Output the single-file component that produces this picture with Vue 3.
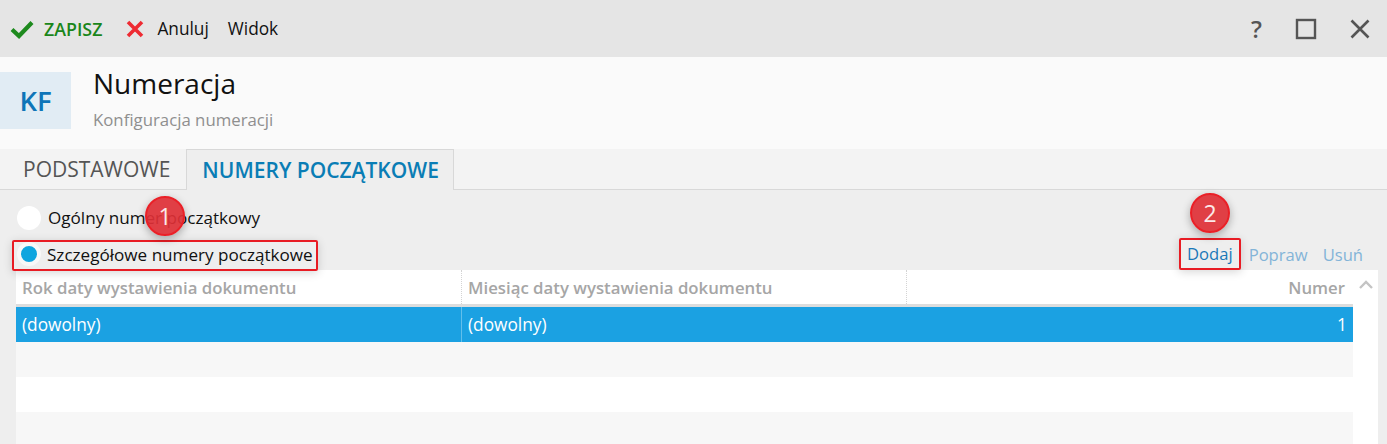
<template>
  <div class="window">
    <div class="toolbar">
      <div class="tool-left">
        <button class="tool save">
          <svg width="24" height="20" viewBox="0 0 24 20"><path d="M2 10.5 L9 17 L22 3.5" fill="none" stroke="#1e8a1e" stroke-width="4.2" /></svg>
          <span>ZAPISZ</span>
        </button>
        <button class="tool cancel">
          <svg width="18" height="18" viewBox="0 0 18 18"><path d="M2 2 L16 16 M16 2 L2 16" fill="none" stroke="#ee2b33" stroke-width="3.6" /></svg>
          <span>Anuluj</span>
        </button>
        <button class="tool view"><span>Widok</span></button>
      </div>
      <div class="tool-right">
        <span class="help">?</span>
        <svg width="22" height="22" viewBox="0 0 22 22"><rect x="2" y="2" width="18" height="18" fill="none" stroke="#555" stroke-width="2.4" /></svg>
        <svg width="20" height="20" viewBox="0 0 20 20"><path d="M1.5 1.5 L18.5 18.5 M18.5 1.5 L1.5 18.5" fill="none" stroke="#555" stroke-width="2.6" /></svg>
      </div>
    </div>

    <div class="head">
      <div class="badge">KF</div>
      <div class="head-text">
        <div class="title">Numeracja</div>
        <div class="subtitle">Konfiguracja numeracji</div>
      </div>
    </div>

    <div class="tabs">
      <div class="tab">PODSTAWOWE</div>
      <div class="tab active">NUMERY POCZĄTKOWE</div>
    </div>

    <div class="content">
      <div class="options">
        <label class="radio-row first">
          <span class="radio"></span>
          <span>Ogólny numer początkowy</span>
        </label>
        <div class="second-row">
          <label class="radio-row marked">
            <span class="radio on"></span>
            <span class="marked-label">Szczegółowe numery początkowe</span>
          </label>
          <div class="actions">
            <span class="action marked-action">Dodaj</span>
            <span class="action faded">Popraw</span>
            <span class="action faded">Usuń</span>
          </div>
        </div>
      </div>

      <div class="grid-wrap">
        <div class="grid">
          <div class="row header">
            <div class="cell">Rok daty wystawienia dokumentu</div>
            <div class="cell">Miesiąc daty wystawienia dokumentu</div>
            <div class="cell num">Numer</div>
          </div>
          <div
            v-for="(r, i) in rows"
            :key="i"
            class="row body"
            :class="{ selected: r.selected, alt: i % 2 === 0 }"
          >
            <div class="cell">{{ r.year }}</div>
            <div class="cell">{{ r.month }}</div>
            <div class="cell num">{{ r.num }}</div>
          </div>
        </div>
        <div class="scrollbar">
          <svg width="14" height="10" viewBox="0 0 14 10"><path d="M1 8 L7 2 L13 8" fill="none" stroke="#c4c4c4" stroke-width="2.4" /></svg>
        </div>
      </div>

      <div class="step step-one">1</div>
      <div class="step step-two">2</div>
    </div>
  </div>
</template>

<script setup>
const rows = [
  { year: '(dowolny)', month: '(dowolny)', num: '1', selected: true },
  { year: '', month: '', num: '' },
  { year: '', month: '', num: '' },
  { year: '', month: '', num: '' }
]
</script>

<style>
html, body {
  margin: 0;
  overflow: hidden;
}
</style>

<style scoped>
.window {
  width: 1387px;
  height: 444px;
  overflow: hidden;
  background: #eeeeee;
  font-family: "Open Sans", "Noto Sans", sans-serif;
  color: #111;
}

.toolbar {
  height: 57px;
  background: #e5e5e5;
  display: flex;
  justify-content: space-between;
  align-items: center;
}

.tool-left {
  display: flex;
  align-items: center;
  padding-left: 10px;
}

.tool {
  display: flex;
  align-items: center;
  border: none;
  background: none;
  padding: 0;
  font: inherit;
  font-size: 17.3px;
  color: #111;
}

.save {
  gap: 10px;
  color: #1a861a;
  font-size: 17.8px;
  font-weight: 600;
  margin-right: 24px;
}

.cancel {
  gap: 13px;
  margin-right: 19px;
}

.tool-right {
  display: flex;
  align-items: center;
  gap: 33px;
  padding-right: 17px;
}

.help {
  font-size: 24px;
  color: #555;
  font-weight: 600;
}

.head {
  height: 92px;
  background: #fafafa;
  display: flex;
  align-items: flex-start;
  box-sizing: border-box;
  padding-top: 15px;
}

.badge {
  width: 71px;
  height: 57px;
  background: #e1ecf4;
  color: #0f75b8;
  font-size: 27.5px;
  font-weight: 600;
  display: flex;
  align-items: center;
  justify-content: center;
}

.head-text {
  margin-left: 22px;
  margin-top: -5px;
}

.title {
  font-size: 28px;
  line-height: 32px;
  color: #111;
}

.subtitle {
  font-size: 16.8px;
  line-height: 22px;
  margin-top: 10px;
  color: #8f8f8f;
}

.tabs {
  height: 41px;
  box-sizing: border-box;
  background: #f3f3f3;
  border-bottom: 1px solid #d8d8d8;
  display: flex;
}

.tab {
  font-size: 21px;
  line-height: 40px;
  color: #555;
  padding: 0 16px 0 23px;
}

.tab.active {
  height: 41px;
  box-sizing: border-box;
  background: #eeeeee;
  border: 1px solid #d8d8d8;
  border-bottom: none;
  color: #0a7db5;
  font-weight: 600;
  padding: 0 14px 0 15px;
  line-height: 40px;
}

.content {
  position: relative;
  padding: 0 9px 0 16px;
}

.options {
  height: 80px;
  font-size: 17.1px;
}

.radio-row {
  display: flex;
  align-items: center;
  gap: 7px;
}

.radio-row.first {
  padding: 14px 0 0 1px;
  height: 27px;
}

.second-row {
  display: flex;
  justify-content: space-between;
  align-items: center;
  margin-top: 7px;
  height: 32px;
}

.radio-row.marked {
  align-self: flex-start;
  margin: 2px 0 0 -4px;
  padding-left: 3px;
  gap: 6px;
  height: 27px;
  width: 299px;
  border: 2px solid #e81c24;
  border-radius: 2px;
  box-shadow: 0 2px 10px rgba(0, 0, 0, 0.16);
}

.marked-label {
  margin-top: -3px;
}

.radio {
  width: 24px;
  height: 24px;
  border-radius: 50%;
  background: #fff;
  box-sizing: border-box;
  flex: none;
}

.radio.on {
  border: 4px solid #f8f8f8;
  background: #0ea5df;
  margin-top: -4px;
}

.actions {
  display: flex;
  align-items: center;
  gap: 15px;
  padding-right: 15px;
  font-size: 16.6px;
}

.action {
  color: #1a78b8;
}

.action.faded {
  color: #83b4d8;
}

.marked-action {
  box-sizing: border-box;
  height: 32px;
  line-height: 28px;
  padding: 0 6px;
  margin-right: -7px;
  border: 2px solid #e81c24;
  border-radius: 2px;
  box-shadow: 0 2px 10px rgba(0, 0, 0, 0.16);
}

.grid-wrap {
  display: flex;
  background: #fff;
}

.grid {
  flex: 1;
}

.row {
  display: grid;
  grid-template-columns: 445px 445px 1fr;
}

.row.header {
  height: 37px;
  box-sizing: border-box;
  border-bottom: 3px solid #dddddd;
  color: #a6a6a6;
  font-weight: 600;
  font-size: 16.8px;
  line-height: 36px;
}

.row.header .cell + .cell {
  border-left: 1px dotted #d4d4d4;
}

.row.header .num {
  padding-right: 8px;
}

.row.body {
  height: 35px;
  font-size: 17.3px;
  line-height: 35px;
  background: #f7f7f7;
}

.row.body.alt {
  background: #fff;
}

.row.body.selected {
  background: #1ba1e2;
  color: #fff;
}

.row.body.selected .cell + .cell:not(.num) {
  border-left: 1px solid #62bfeb;
}

.cell {
  padding: 0 6px;
  white-space: nowrap;
  overflow: hidden;
}

.num {
  text-align: right;
}

.scrollbar {
  width: 25px;
  display: flex;
  justify-content: center;
  padding-top: 10px;
  box-sizing: border-box;
  align-items: flex-start;
}

.step {
  position: absolute;
  width: 40px;
  height: 40px;
  border-radius: 50%;
  box-sizing: border-box;
  border: 2px solid #ea2027;
  background: rgba(222, 48, 54, 0.92);
  color: #fbe9e9;
  font-size: 23px;
  font-weight: 500;
  display: flex;
  align-items: center;
  justify-content: center;
  box-shadow: 0 3px 8px rgba(0, 0, 0, 0.3);
}

.step-one {
  left: 145px;
  top: 6px;
}

.step-two {
  left: 1190px;
  top: 3px;
}
</style>
